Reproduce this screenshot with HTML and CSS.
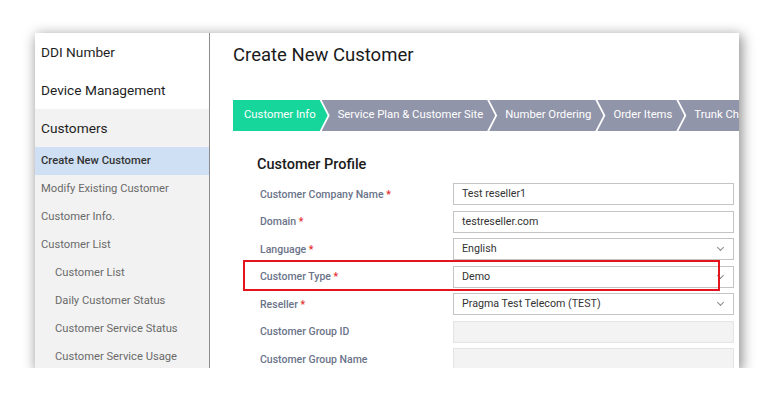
FILE: index.html
```html
<!DOCTYPE html>
<html lang="en">
<head>
<meta charset="UTF-8">
<meta name="viewport" content="width=device-width, initial-scale=1.0">
<title>Create New Customer</title>
<link rel="stylesheet" href="styles.css">
</head>
<body>
<div class="frame">
  <div class="sidebar">
    <div class="nav-top">DDI Number</div>
    <div class="nav-top">Device Management</div>
    <div class="nav-group">
      <div class="nav-head">Customers</div>
      <div class="nav-item active">Create New Customer</div>
      <div class="nav-item">Modify Existing Customer</div>
      <div class="nav-item">Customer Info.</div>
      <div class="nav-item">Customer List</div>
      <div class="nav-item sub">Customer List</div>
      <div class="nav-item sub">Daily Customer Status</div>
      <div class="nav-item sub">Customer Service Status</div>
      <div class="nav-item sub">Customer Service Usage</div>
    </div>
  </div>

  <div class="main">
    <h1 class="page-title">Create New Customer</h1>

    <div class="steps">
      <div class="step current">Customer Info</div>
      <div class="step">Service Plan &amp; Customer Site</div>
      <div class="step">Number Ordering</div>
      <div class="step">Order Items</div>
      <div class="step">Trunk Channels</div>
    </div>

    <div class="profile">
      <h2 class="section-title">Customer Profile</h2>
      <div class="rows">
        <div class="row">
          <label>Customer Company Name <span class="req">*</span></label>
          <div class="field">Test reseller1</div>
        </div>
        <div class="row">
          <label>Domain <span class="req">*</span></label>
          <div class="field">testreseller.com</div>
        </div>
        <div class="row">
          <label>Language <span class="req">*</span></label>
          <div class="field select">English</div>
        </div>
        <div class="row">
          <label>Customer Type <span class="req">*</span></label>
          <div class="field select">Demo</div>
          <div class="callout"></div>
        </div>
        <div class="row">
          <label>Reseller <span class="req">*</span></label>
          <div class="field select">Pragma Test Telecom (TEST)</div>
        </div>
        <div class="row">
          <label>Customer Group ID</label>
          <div class="field disabled"></div>
        </div>
        <div class="row">
          <label>Customer Group Name</label>
          <div class="field disabled"></div>
        </div>
      </div>
    </div>
  </div>
</div>
</body>
</html>
```

FILE: styles.css
```css
body {
  margin: 0;
  background: #fff;
  font-family: Roboto, "Noto Sans", sans-serif;
}

/* screenshot frame */
.frame {
  display: flex;
  width: 704px;
  height: 335px;
  margin: 33px 0 0 35px;
  overflow: hidden;
  background: #fff;
  box-shadow: 2px 3px 12px 1px rgba(0, 0, 0, 0.45);
}

/* left navigation */
.sidebar {
  width: 174px;
  flex: 0 0 auto;
  border-right: 1px solid #8c8c8c;
}
.nav-top {
  height: 38px;
  line-height: 39px;
  padding-left: 6px;
  font-size: 13.7px;
  color: #1e1e1e;
}
.nav-group {
  background: #f2f2f2;
}
.nav-head {
  height: 38px;
  line-height: 38px;
  padding-left: 6px;
  font-size: 13.7px;
  color: #1e1e1e;
}
.nav-item {
  height: 28px;
  line-height: 28px;
  padding-left: 6px;
  font-size: 11.2px;
  color: #6a6a6a;
  white-space: nowrap;
}
.nav-item.sub {
  padding-left: 20px;
}
.nav-item.active {
  background: #cfe0f4;
  color: #333;
  font-weight: 500;
}

/* main content */
.main {
  flex: 1;
  padding-left: 23px;
  min-width: 0;
}
.page-title {
  margin: 0 0 32px;
  padding-top: 10px;
  line-height: 25px;
  font-size: 18.5px;
  font-weight: 400;
  color: #1a1a1a;
}

/* wizard steps */
.steps {
  display: flex;
  height: 31px;
  overflow: hidden;
}
.step {
  flex: 0 0 auto;
  height: 31px;
  line-height: 30px;
  padding: 0 12px 0 16px;
  margin-right: -6px;
  background: #9195aa;
  color: #fff;
  font-size: 11.3px;
  white-space: nowrap;
  clip-path: polygon(0 0, calc(100% - 8px) 0, 100% 50%, calc(100% - 8px) 100%, 0 100%, 8px 50%);
}
.step.current {
  padding-left: 11px;
  background: #16d69b;
  clip-path: polygon(0 0, calc(100% - 8px) 0, 100% 50%, calc(100% - 8px) 100%, 0 100%);
}

/* form */
.profile {
  padding-left: 24px;
}
.section-title {
  margin: 24px 0 8px;
  line-height: 20px;
  font-size: 14.5px;
  font-weight: 500;
  color: #1a1a1a;
}
.rows {
  display: flex;
  flex-direction: column;
  gap: 5.5px;
}
.row {
  position: relative;
  display: grid;
  grid-template-columns: 196px 281px;
  height: 22px;
  align-items: center;
}
.row label {
  padding-left: 3px;
  font-size: 10.5px;
  font-weight: 500;
  color: #6b7389;
}
.req {
  color: #e42b2b;
}
.field {
  position: relative;
  box-sizing: border-box;
  height: 22px;
  line-height: 20px;
  padding-left: 8px;
  border: 1px solid #c4c4c4;
  font-size: 10.7px;
  color: #333;
}
.field.select::after {
  content: "";
  position: absolute;
  right: 10px;
  top: 6px;
  width: 4px;
  height: 4px;
  border-right: 1px solid #888;
  border-bottom: 1px solid #888;
  transform: rotate(45deg);
}
.field.disabled {
  background: #f3f3f3;
  border-color: #e4e4e4;
}

/* red annotation box */
.callout {
  position: absolute;
  left: -14px;
  top: -6px;
  width: 477px;
  height: 31px;
  box-sizing: border-box;
  border: 2px solid #e3141d;
}
```
